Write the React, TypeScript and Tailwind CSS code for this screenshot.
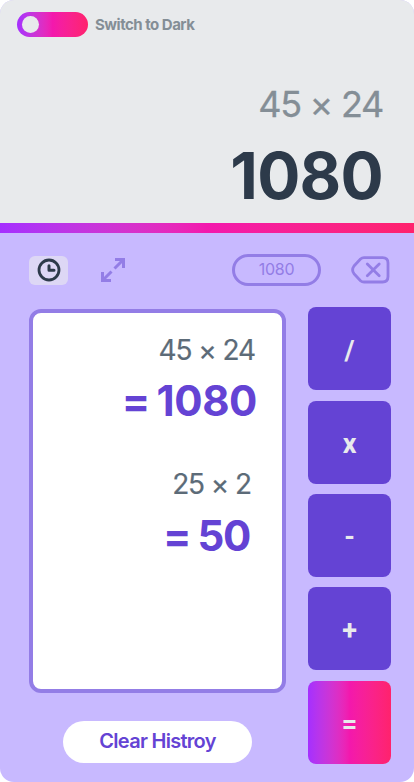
const inter = "font-['Inter','Liberation_Sans',sans-serif]";

const history = [
  {
    expression: '45 × 24',
    result: '= 1080',
    expressionClass: 'tracking-[-1.1px] pr-[27px]',
    resultClass: 'mt-2.5 pr-[25px] tracking-[-0.4px] [word-spacing:-3px]',
  },
  {
    expression: '25 × 2',
    result: '= 50',
    expressionClass: 'tracking-[-1.1px] pr-[31px]',
    resultClass: 'mt-[11px] pr-[32px] tracking-[-1.4px] [word-spacing:-1px]',
  },
];

const operators = ['/', 'x', '-', '+', '='];

function ClockIcon() {
  return (
    <svg width="24" height="24" viewBox="0 0 24 24" fill="none" stroke="#2d3a4a">
      <circle cx="12" cy="12" r="10" strokeWidth="2.8" />
      <path d="M12 7.8V12.2H17" strokeWidth="3" strokeLinecap="round" strokeLinejoin="round" />
    </svg>
  );
}

function ExpandIcon() {
  return (
    <svg width="24" height="24" viewBox="0 0 24 24" fill="none" stroke="#937de6" strokeWidth="3">
      <path d="M14 1.5H22.5V10M22 2L13.5 10.5" />
      <path d="M1.5 14V22.5H10M2 22L10.5 13.5" />
    </svg>
  );
}

function BackspaceIcon() {
  return (
    <svg
      width="40"
      height="28"
      viewBox="0 0 40 28"
      fill="none"
      stroke="#937de6"
      strokeWidth="2.8"
      strokeLinecap="round"
      strokeLinejoin="round"
    >
      <path d="M14 1.7H32.5Q38 1.7 38 7V20.5Q38 26 32.5 26H14Q12 26 10.5 24.7L4 17.7Q1.2 14 4 10L10.5 3Q12 1.7 14 1.7Z" />
      <path d="M17.3 8L29.2 19.8M29.2 8L17.3 19.8" />
    </svg>
  );
}

function Operator({ label }: { label: string }) {
  const fill = label === '=' ? 'bg-linear-to-r from-[#a52fff] via-[#f318ad] to-[#ff226c]' : 'bg-[#6443d4]';
  return (
    <button
      className={`flex h-[83px] w-[83px] items-center justify-center rounded-lg pt-1 font-['Roboto',sans-serif] text-[27px] font-bold text-[#e8eaec] ${fill}`}
    >
      {label}
    </button>
  );
}

export default function App() {
  return (
    <div className={`flex h-[782px] w-[414px] flex-col overflow-hidden rounded-[14px] bg-[#c8b9ff] ${inter}`}>
      <header className="h-[223px] bg-[#e8eaec] pt-3">
        <div className="flex h-[25px] items-center pl-[17px]">
          <button className="flex h-[25px] w-[71px] items-center rounded-full bg-linear-to-r from-[#a52fff] via-[#f318ad] to-[#ff226c] pl-[5px]">
            <span className="h-[17px] w-[17px] rounded-full bg-[#e8eaec]" />
          </button>
          <span className="pt-px pl-[7px] text-[15px] font-bold tracking-[-0.5px] text-[#848e96]">Switch to Dark</span>
        </div>
        <div className="mt-[43px] pr-[31px] text-right text-[36px] leading-[48px] tracking-[-1.3px] text-[#848e96] [-webkit-text-stroke:0.3px_#848e96]">
          45 × 24
        </div>
        <div className="mt-4 pr-[31px] text-right text-[64px] leading-[64px] font-bold tracking-[-0.7px] text-[#2d3a4a] [font-kerning:none]">
          1080
        </div>
      </header>
      <div className="h-2.5 shrink-0 bg-linear-to-r from-[#a52fff] via-[#f318ad] to-[#ff226c]" />

      <div className="mt-[21px] flex h-[32px] shrink-0 items-center pl-[29px]">
        <button className="flex h-[29px] w-[39px] items-center justify-center rounded-md bg-[#ddd7f5]">
          <ClockIcon />
        </button>
        <button className="ml-[33px]">
          <ExpandIcon />
        </button>
        <div className="ml-[107px] flex h-[32px] w-[89px] items-center justify-center rounded-full border-3 border-[#937de6] pb-0.5 text-base tracking-[-0.3px] text-[#937de6]">
          1080
        </div>
        <button className="ml-[29px]">
          <BackspaceIcon />
        </button>
      </div>

      <main className="mt-[21px] flex justify-between pr-[23px] pl-[29px]">
        <section className="w-[257px] pt-0.5">
          <div className="h-[384px] rounded-xl border-4 border-[#937de6] bg-white pt-5 text-right">
            {history.map((item) => (
              <div key={item.expression} className="mb-[42px]">
                <div
                  className={`text-[28px] leading-[34px] text-[#5c6b78] [-webkit-text-stroke:0.2px_#5c6b78] ${item.expressionClass}`}
                >
                  {item.expression}
                </div>
                <div
                  className={`text-[42px] leading-[48px] font-bold text-[#6443d4] [font-kerning:none] ${item.resultClass}`}
                >
                  {item.result}
                </div>
              </div>
            ))}
          </div>
          <button className="mt-7 ml-[34px] flex h-[42px] w-[189px] items-center justify-center rounded-full bg-white pb-0.5 text-xl font-semibold tracking-[-0.72px] text-[#6443d4]">
            Clear Histroy
          </button>
        </section>
        <nav className="flex flex-col gap-[10.35px] pt-[0.3px]">
          {operators.map((label) => (
            <Operator key={label} label={label} />
          ))}
        </nav>
      </main>
    </div>
  );
}
